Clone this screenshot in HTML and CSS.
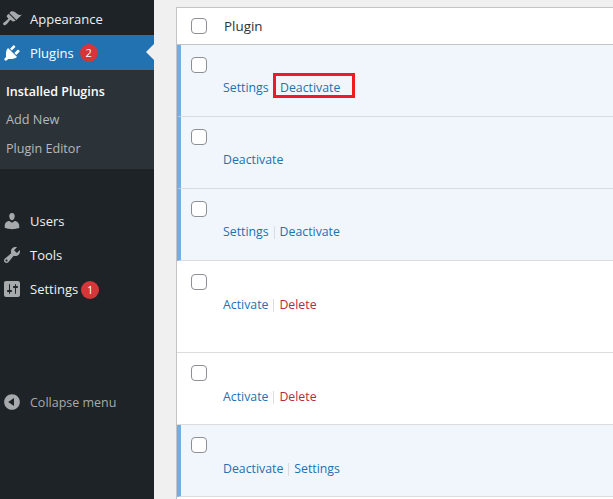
FILE: index.html
```html
<!DOCTYPE html>
<html lang="en">
<head>
<meta charset="utf-8">
<title>Plugins</title>
<link rel="stylesheet" href="styles.css">
</head>
<body>
<div class="app">
  <nav class="sidebar">
    <a class="item item-first"><svg class="icon" viewBox="0 0 20 20"><path d="M14.48 11.06L7.41 3.99l1.5-1.5c.5-.56 2.3-.47 3.51.32 1.21.8 1.43 1.28 2.91 2.1 1.18.64 2.45 1.26 4.45.85zm-.71.71L6.7 4.7 4.93 6.47c-.39.39-.39 1.02 0 1.41l1.06 1.06c.39.39.39 1.03 0 1.42-.6.6-1.43 1.11-2.21 1.69-.35.26-.7.53-1.01.84C1.43 13.23.4 14.84 1.4 15.84c.99 1 2.59-.04 3.94-1.38.31-.31.58-.66.84-1.01.58-.78 1.09-1.61 1.69-2.21.39-.39 1.02-.39 1.41 0l1.06 1.06c.39.39 1.02.39 1.41 0z"/></svg><span>Appearance</span></a>
    <a class="item item-active"><svg class="icon" viewBox="0 0 20 20"><path d="M13.11 4.36L9.87 7.6 8 5.73l3.24-3.24c.35-.34 1.05-.2 1.56.32.52.51.66 1.21.31 1.55zm-8 1.77l.91-1.12 9.01 9.01-1.19.84c-.71.71-2.63 1.16-3.82 1.16H6.14L4.9 17.26c-.59.59-1.54.59-2.12 0-.59-.58-.59-1.53 0-2.12l1.24-1.24v-3.88c0-1.13.4-3.19 1.09-3.89zm7.26 3.97l3.24-3.24c.34-.35 1.04-.21 1.55.31.52.51.66 1.21.31 1.55l-3.24 3.25z"/></svg><span>Plugins</span><b class="badge badge-plugins">2</b></a>
    <div class="submenu">
      <a class="sub sub-current">Installed Plugins</a>
      <a class="sub">Add New</a>
      <a class="sub sub-last">Plugin Editor</a>
    </div>
    <a class="item"><svg class="icon" viewBox="0 0 20 20"><path d="M10 9.25c-2.27 0-2.73-3.44-2.73-3.44C7 4.02 7.82 2 9.97 2c2.16 0 2.98 2.02 2.71 3.81 0 0-.41 3.44-2.68 3.44zm0 2.57L12.72 10c2.39 0 4.52 2.33 4.52 4.53v2.49s-3.65 1.13-7.24 1.13c-3.65 0-7.24-1.13-7.24-1.13v-2.49c0-2.25 1.94-4.48 4.47-4.48z"/></svg><span>Users</span></a>
    <a class="item"><svg class="icon" viewBox="0 0 20 20"><path d="M16.68 9.77c-1.34 1.34-3.3 1.67-4.95.99l-5.41 6.52c-.99.99-2.59.99-3.58 0s-.99-2.59 0-3.57l6.52-5.42c-.68-1.65-.35-3.61.99-4.95 1.28-1.28 3.12-1.62 4.72-1.06l-2.89 2.89 2.82 2.82 2.86-2.87c.53 1.58.18 3.39-1.08 4.65zM3.81 16.21c.4.39 1.04.39 1.43 0 .4-.4.4-1.04 0-1.43-.39-.4-1.03-.4-1.43 0-.39.39-.39 1.03 0 1.43z"/></svg><span>Tools</span></a>
    <a class="item"><svg class="icon" viewBox="0 0 20 20"><path d="M18 16V4c0-1.1-.9-2-2-2H4c-1.1 0-2 .9-2 2v12c0 1.1.9 2 2 2h12c1.1 0 2-.9 2-2zM8 11h1c.55 0 1 .45 1 1s-.45 1-1 1H8v1.5c0 .28-.22.5-.5.5s-.5-.22-.5-.5V13H6c-.55 0-1-.45-1-1s.45-1 1-1h1V5.5c0-.28.22-.5.5-.5s.5.22.5.5V11zm5-2h-1c-.55 0-1-.45-1-1s.45-1 1-1h1V5.5c0-.28.22-.5.5-.5s.5.22.5.5V7h1c.55 0 1 .45 1 1s-.45 1-1 1h-1v5.5c0 .28-.22.5-.5.5s-.5-.22-.5-.5V9z"/></svg><span>Settings</span><b class="badge badge-settings">1</b></a>
    <a class="item item-collapse"><svg class="icon" viewBox="0 0 20 20"><path d="M10 2.16c4.33 0 7.84 3.51 7.84 7.84s-3.51 7.84-7.84 7.84S2.16 14.33 2.16 10 5.71 2.16 10 2.16zm2 11.72V6.12L6.18 9.97z"/></svg><span class="collapse-label">Collapse menu</span></a>
  </nav>
  <main class="content">
    <section class="table">
      <div class="row-head"><i class="check"></i><span class="head-title">Plugin</span></div>
      <div class="row row-on row-high">
        <i class="check"></i>
        <div class="actions"><a class="link">Settings</a><span class="gap"></span><a class="link marked">Deactivate<span class="redbox"></span></a></div>
      </div>
      <div class="row row-on row-high">
        <i class="check"></i>
        <div class="actions"><a class="link">Deactivate</a></div>
      </div>
      <div class="row row-on row-high">
        <i class="check"></i>
        <div class="actions"><a class="link">Settings</a><span class="sep"></span><a class="link">Deactivate</a></div>
      </div>
      <div class="row row-tall">
        <i class="check"></i>
        <div class="actions"><a class="link">Activate</a><span class="sep"></span><a class="link danger">Delete</a></div>
      </div>
      <div class="row">
        <i class="check"></i>
        <div class="actions"><a class="link">Activate</a><span class="sep"></span><a class="link danger">Delete</a></div>
      </div>
      <div class="row row-on">
        <i class="check"></i>
        <div class="actions"><a class="link">Deactivate</a><span class="sep"></span><a class="link">Settings</a></div>
      </div>
    </section>
  </main>
</div>
</body>
</html>
```
FILE: styles.css
```css
* { box-sizing: border-box; }
html, body { margin: 0; height: 100%; overflow: hidden; }
body { background: #f0f0f1; font-family: "Open Sans", "Noto Sans", sans-serif; font-size: 13px; color: #3c434a; }
.app { display: flex; height: 499px; width: 613px; }

.sidebar { width: 154px; flex: none; background: #1d2327; display: flex; flex-direction: column; }
.item { display: flex; align-items: center; height: 34px; color: #f0f0f1; line-height: 18px; }
.item-first { height: 35px; padding-top: 3px; }
.icon { width: 20px; height: 20px; margin: 0 8px 0 2px; flex: none; fill: #a7aaad; }
.item-active { height: 35px; background: #2271b1; color: #fff; position: relative; }
.item-active .icon { fill: #fff; }
.item-active::after { content: ""; position: absolute; right: 0; top: 9px; border: 8px solid transparent; border-right-color: #f0f0f1; border-left-width: 0; }
.badge { width: 18px; height: 18px; border-radius: 50%; background: #d63638; color: #fff; font-size: 11px; font-weight: 400; line-height: 18px; text-align: center; flex: none; }
.badge-plugins { margin-left: 6px; }
.badge-settings { margin: 1px 0 0 3px; }
.submenu { background: #2c3338; height: 99px; margin-bottom: 35px; padding-top: 8px; display: flex; flex-direction: column; }
.sub { display: block; height: 28px; line-height: 28px; padding-left: 6px; color: #b4b9be; font-size: 12.7px; flex: none; }
.sub-last { margin-top: 2px; font-size: 12.6px; }
.sub-current { color: #fff; font-weight: 600; font-size: 12.5px; height: 27px; }
.item-collapse { margin-top: 79px; color: #a7aaad; }
.collapse-label { font-size: 12.5px; padding-top: 2px; }

.content { flex: 1; min-width: 0; padding: 7px 0 0 22px; }
.table { background: #fff; border-left: 1px solid #c3c4c7; border-top: 1px solid #c3c4c7; height: 500px; }
.row-head { height: 37px; border-bottom: 1px solid #c3c4c7; display: flex; align-items: center; padding-left: 14px; }
.head-title { margin-left: 17px; font-size: 13.4px; line-height: 20px; color: #2c3338; }
.check { display: block; width: 16px; height: 16px; background: #fff; border: 1px solid #8c8f94; border-radius: 4px; flex: none; }
.row { height: 72px; border-bottom: 1px solid #dcdcde; padding: 12px 0 0 14px; }
.row-tall { height: 92px; padding-top: 13px; }
.row-on { background: #f0f6fc; border-left: 4px solid #72aee6; padding-left: 10px; }
.actions { display: flex; align-items: center; height: 20px; margin: 6px 0 0 32px; white-space: nowrap; font-size: 12.3px; }
.row-tall .actions { margin-top: 5px; }
.row-high .actions { margin-top: 5px; }
.link { color: #2271b1; line-height: 20px; }
.danger { color: #b32d3a; }
.sep { width: 1px; height: 13px; background: #dcdcde; margin: 0 5px 0 5px; }
.gap { width: 11.4px; }
.marked { position: relative; }
.redbox { position: absolute; left: -7.4px; top: -5px; width: 82px; height: 25px; border: 3px solid #ed1c24; }
```
